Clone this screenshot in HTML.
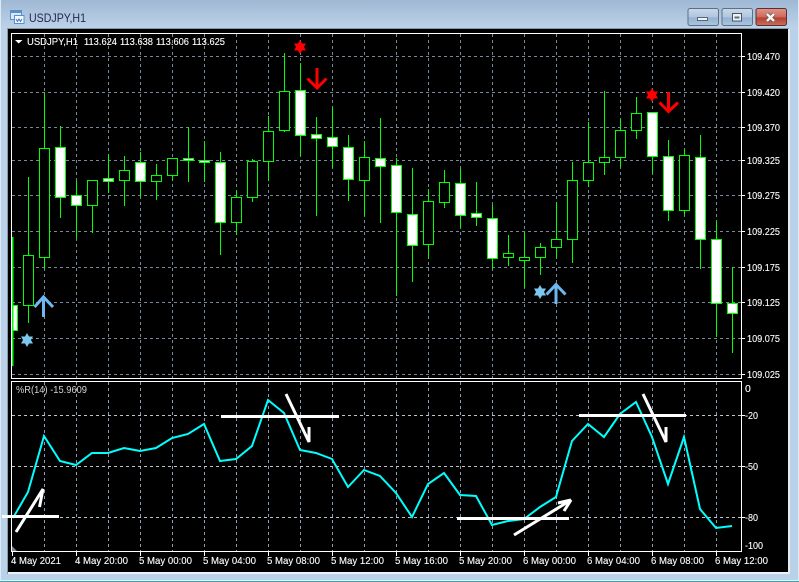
<!DOCTYPE html>
<html><head><meta charset="utf-8"><title>USDJPY,H1</title>
<style>
html,body{margin:0;padding:0;width:799px;height:582px;overflow:hidden;background:#b9d1e9}
svg{display:block;position:absolute;left:0;top:0}
text{font-family:"Liberation Sans",sans-serif;font-size:10.5px;fill:#fff;stroke:#fff;stroke-width:.12px}
.c rect{stroke:#00ff00;stroke-width:1}
.w{fill:#fff}.b{fill:#000}
</style></head><body>
<svg width="799" height="582" viewBox="0 0 799 582" xmlns="http://www.w3.org/2000/svg">
<defs>
<linearGradient id="tb" x1="0" y1="0" x2="0" y2="1"><stop offset="0" stop-color="#9fb8d3"/><stop offset="1" stop-color="#bdd3ea"/></linearGradient>
<linearGradient id="bt" x1="0" y1="0" x2="0" y2="1"><stop offset="0" stop-color="#c9d9ea"/><stop offset=".5" stop-color="#b0c6de"/><stop offset=".55" stop-color="#94b2d0"/><stop offset="1" stop-color="#aac6e2"/></linearGradient>
<linearGradient id="cl" x1="0" y1="0" x2="0" y2="1"><stop offset="0" stop-color="#e0958a"/><stop offset=".5" stop-color="#cc6a5c"/><stop offset=".55" stop-color="#b5402f"/><stop offset="1" stop-color="#c8705c"/></linearGradient>
<clipPath id="mc"><rect x="12" y="34" width="729" height="344"/></clipPath>
</defs>
<rect width="799" height="582" fill="#b9d1e9"/>
<rect width="799" height="29" fill="url(#tb)"/>
<rect x="0" y="0" width="1" height="582" fill="#dfe9f3"/>
<rect x="798" y="0" width="1" height="582" fill="#dfe9f3"/>
<rect x="0" y="581" width="799" height="1" fill="#2fa6b0"/>
<rect x="0" y="580" width="799" height="1" fill="#e8f0f7"/>
<rect x="7" y="28" width="782" height="546" fill="#8a97a5"/>
<rect x="8" y="29" width="780" height="543" fill="#000"/>
<rect x="8" y="572" width="781" height="2" fill="#eef2f6"/>
<rect x="788" y="29" width="2" height="545" fill="#e6ebf0"/>

<!-- title bar -->
<rect x="10.500" y="10.500" width="11" height="9" fill="#dbe9f7" stroke="#5b8fc7"/>
<rect x="11" y="11" width="10" height="2" fill="#5b8fc7"/>
<rect x="14.500" y="15.500" width="9.500" height="8" fill="#f4f8fc" stroke="#5b8fc7"/>
<path d="M16 19l1.500 2.500 1.500-2.500 1.500 2.500 1.500-2.500" fill="none" stroke="#3f78b8"/>
<text x="29" y="22" style="font-size:12px;fill:#26264e;stroke:none" textLength="57" lengthAdjust="spacingAndGlyphs">USDJPY,H1</text>

<rect x="688" y="8.500" width="30.500" height="17" rx="2" fill="url(#bt)" stroke="#5f6f82"/>
<rect x="697.500" y="17.500" width="10" height="3" fill="#f0f3f6" stroke="#56657a"/>
<rect x="722" y="8.500" width="30.500" height="17" rx="2" fill="url(#bt)" stroke="#5f6f82"/>
<rect x="732.500" y="13.500" width="9" height="7.500" fill="#eef2f6" stroke="#46566a"/>
<rect x="734.500" y="16.500" width="5" height="2" fill="#5a6c82"/>
<rect x="756" y="8.500" width="30.500" height="17" rx="2" fill="url(#cl)" stroke="#5c2f38"/>
<path d="M767 14l7 7M774 14l-7 7" stroke="#5d4b4b" stroke-width="4"/>
<path d="M767 14l7 7M774 14l-7 7" stroke="#f4f4f4" stroke-width="2.600"/>

<!-- panels -->
<rect x="11.500" y="33.500" width="730" height="345" fill="#000" stroke="#fff" shape-rendering="crispEdges"/>
<rect x="11.500" y="381.500" width="730" height="170" fill="#000" stroke="#fff" shape-rendering="crispEdges"/>

<!-- grid -->
<g fill="none" stroke="#778899" stroke-dasharray="3 3" shape-rendering="crispEdges">
<path d="M12 56.500H741M12 92.500H741M12 127.500H741M12 160.500H741M12 195.500H741M12 231.500H741M12 267.500H741M12 302.500H741M12 338.500H741M12 374.500H741"/>
<path d="M44.500 34V378M76.500 34V378M108.500 34V378M140.500 34V378M172.500 34V378M204.500 34V378M236.500 34V378M268.500 34V378M300.500 34V378M332.500 34V378M364.500 34V378M396.500 34V378M428.500 34V378M460.500 34V378M492.500 34V378M524.500 34V378M556.500 34V378M588.500 34V378M620.500 34V378M652.500 34V378M684.500 34V378M716.500 34V378"/>
<path d="M44.500 382V551M76.500 382V551M108.500 382V551M140.500 382V551M172.500 382V551M204.500 382V551M236.500 382V551M268.500 382V551M300.500 382V551M332.500 382V551M364.500 382V551M396.500 382V551M428.500 382V551M460.500 382V551M492.500 382V551M524.500 382V551M556.500 382V551M588.500 382V551M620.500 382V551M652.500 382V551M684.500 382V551M716.500 382V551" stroke="#8c9cb0"/>
<path d="M12 415.500H741M12 466.500H741M12 517.500H741" stroke="#c0c4c8"/>
</g>

<!-- candles -->
<g clip-path="url(#mc)" shape-rendering="crispEdges">
<path fill="none" stroke="#00ff00" d="M28.500 177V323M44.500 93V269M60.500 126V218M76.500 181V238M92.500 180V233M108.500 154V193M124.500 156V206M140.500 152V197M156.500 164V200M172.500 158V181M188.500 127V182M204.500 141V182M220.500 152V255M236.500 190V235M252.500 159V202M268.500 116V181M284.500 53V132M300.500 63V156M316.500 117V216M332.500 107V168M348.500 135V201M364.500 141V216M380.500 118V223M396.500 158V296M412.500 168V282M428.500 189V259M444.500 170V208M460.500 169V228M476.500 182V226M492.500 205V269M508.500 235V266M524.500 232V288M540.500 243V275M556.500 202V258M572.500 162V263M588.500 122V187M604.500 91V175M620.500 119V167M636.500 97V139M652.500 112V173M668.500 140V221M684.500 149V215M700.500 135V269M716.500 221V337M732.500 267V353"/>
<g class="c">
<rect class="w" x="7.500" y="305.500" width="10" height="25"/>
<rect class="b" x="23.500" y="255.500" width="10" height="50"/>
<rect class="b" x="39.500" y="148.500" width="10" height="109"/>
<rect class="w" x="55.500" y="147.500" width="10" height="50"/>
<rect class="w" x="71.500" y="195.500" width="10" height="10"/>
<rect class="b" x="87.500" y="180.500" width="10" height="25"/>
<rect class="w" x="103.500" y="178.500" width="10" height="3"/>
<rect class="b" x="119.500" y="170.500" width="10" height="10"/>
<rect class="w" x="135.500" y="162.500" width="10" height="19"/>
<rect class="b" x="151.500" y="175.500" width="10" height="6"/>
<rect class="b" x="167.500" y="158.500" width="10" height="17"/>
<rect class="w" x="183.500" y="158.500" width="10" height="2"/>
<rect class="w" x="199.500" y="160.500" width="10" height="2"/>
<rect class="w" x="215.500" y="162.500" width="10" height="60"/>
<rect class="b" x="231.500" y="197.500" width="10" height="25"/>
<rect class="b" x="247.500" y="161.500" width="10" height="36"/>
<rect class="b" x="263.500" y="131.500" width="10" height="30"/>
<rect class="b" x="279.500" y="91.500" width="10" height="39"/>
<rect class="w" x="295.500" y="90.500" width="10" height="45"/>
<rect class="w" x="311.500" y="134.500" width="10" height="4"/>
<rect class="w" x="327.500" y="137.500" width="10" height="9"/>
<rect class="w" x="343.500" y="147.500" width="10" height="32"/>
<rect class="b" x="359.500" y="157.500" width="10" height="23"/>
<rect class="w" x="375.500" y="158.500" width="10" height="8"/>
<rect class="w" x="391.500" y="165.500" width="10" height="47"/>
<rect class="w" x="407.500" y="214.500" width="10" height="31"/>
<rect class="b" x="423.500" y="201.500" width="10" height="43"/>
<rect class="b" x="439.500" y="182.500" width="10" height="20"/>
<rect class="w" x="455.500" y="183.500" width="10" height="32"/>
<rect class="w" x="471.500" y="213.500" width="10" height="4"/>
<rect class="w" x="487.500" y="218.500" width="10" height="40"/>
<rect class="b" x="503.500" y="253.500" width="10" height="4"/>
<rect class="b" x="519.500" y="257.500" width="10" height="3"/>
<rect class="b" x="535.500" y="247.500" width="10" height="10"/>
<rect class="b" x="551.500" y="239.500" width="10" height="8"/>
<rect class="b" x="567.500" y="180.500" width="10" height="59"/>
<rect class="b" x="583.500" y="162.500" width="10" height="18"/>
<rect class="b" x="599.500" y="157.500" width="10" height="5"/>
<rect class="b" x="615.500" y="130.500" width="10" height="27"/>
<rect class="b" x="631.500" y="113.500" width="10" height="17"/>
<rect class="w" x="647.500" y="112.500" width="10" height="44"/>
<rect class="w" x="663.500" y="156.500" width="10" height="54"/>
<rect class="b" x="679.500" y="155.500" width="10" height="55"/>
<rect class="w" x="695.500" y="157.500" width="10" height="82"/>
<rect class="w" x="711.500" y="239.500" width="10" height="64"/>
<rect class="w" x="727.500" y="303.500" width="10" height="10"/>
</g>
<path fill="none" stroke="#00ff00" stroke-width="1.500" d="M12.800 237V366"/>
</g>

<!-- red markers -->
<g fill="#ff0000">
<polygon points="300,40 306,50.500 294,50.500"/><polygon points="300,54 306,43.500 294,43.500"/>
<polygon points="652,88 658,98.500 646,98.500"/><polygon points="652,102 658,91.500 646,91.500"/>
</g>
<g fill="none" stroke="#ff0000" stroke-width="3">
<path d="M317 68V87M307.500 78.500L317 88L326.500 78.500"/>
<path d="M668.500 92V111M659.500 102.500L668.500 111.500L678 102.500"/>
</g>

<!-- blue markers -->
<g fill="#7cc8ee">
<polygon points="27,333 33,343.500 21,343.500"/><polygon points="27,347 33,336.500 21,336.500"/>
<polygon points="540,285 546,295.500 534,295.500"/><polygon points="540,299 546,288.500 534,288.500"/>
</g>
<g fill="none" stroke="#6db8f0" stroke-width="3">
<path d="M43.500 297V317M34.500 307L43.500 297L53 307"/>
<path d="M556 284V304M546.500 294.500L556 284.500L565.500 294.500"/>
</g>

<!-- %R line -->
<path fill="none" stroke="#00ffff" stroke-width="2" stroke-linejoin="miter" d="M13 518L28 492L44 436L60 461L76 465L92 453L108 453L124 448L140 451L156 448L172 438L188 434L204 424L220 461L236 459L252 446L268 400L284 413L300 450L316 453L332 459L348 487L364 470L380 476L396 493L412 517L428 484L444 473L460 495L476 496L492 525L508 521L524 519L540 507L556 497L572 441L588 424L604 437L620 414L636 402L652 437L668 484L684 437L700 509L716 528L732 526"/>

<!-- drawn white objects -->
<g fill="none" stroke="#fff" stroke-width="3">
<path d="M2 516.500H59"/>
<path d="M16 532L43 489L39.500 507"/>
<path d="M221 416.500H339"/>
<path d="M286 394L309 442V427"/>
<path d="M457 518.500H569"/>
<path d="M514 535L571 500L564 511M571 500L558 503"/>
<path d="M579 415.500H686"/>
<path d="M643 394L666 442V427"/>
</g>

<!-- small triangle -->
<path d="M12 546L17 551H12Z" fill="#778899"/>
<path d="M15 40H22.500L18.700 43.500Z" fill="#fff"/>

<!-- header text -->
<text x="27" y="45" textLength="51" lengthAdjust="spacingAndGlyphs">USDJPY,H1</text>
<text x="84" y="45" textLength="33" lengthAdjust="spacingAndGlyphs">113.624</text>
<text x="120" y="45" textLength="33" lengthAdjust="spacingAndGlyphs">113.638</text>
<text x="156" y="45" textLength="33" lengthAdjust="spacingAndGlyphs">113.606</text>
<text x="192" y="45" textLength="33" lengthAdjust="spacingAndGlyphs">113.625</text>
<text x="16" y="393" textLength="71" lengthAdjust="spacingAndGlyphs" style="fill:#d4d4d4;stroke:none">%R(14) -15.9609</text>

<!-- axis ticks -->
<path fill="none" stroke="#fff" shape-rendering="crispEdges" d="M741 56.500h4M741 92.500h4M741 127.500h4M741 160.500h4M741 195.500h4M741 231.500h4M741 267.500h4M741 302.500h4M741 338.500h4M741 374.500h4M741 415.500h4M741 466.500h4M741 517.500h4M12.500 552v4M76.500 552v4M140.500 552v4M204.500 552v4M268.500 552v4M332.500 552v4M396.500 552v4M460.500 552v4M524.500 552v4M588.500 552v4M652.500 552v4M716.500 552v4"/>

<!-- price labels -->
<text x="747" y="60" textLength="33" lengthAdjust="spacingAndGlyphs">109.470</text>
<text x="747" y="96" textLength="33" lengthAdjust="spacingAndGlyphs">109.420</text>
<text x="747" y="131" textLength="33" lengthAdjust="spacingAndGlyphs">109.370</text>
<text x="747" y="164" textLength="33" lengthAdjust="spacingAndGlyphs">109.325</text>
<text x="747" y="199" textLength="33" lengthAdjust="spacingAndGlyphs">109.275</text>
<text x="747" y="235" textLength="33" lengthAdjust="spacingAndGlyphs">109.225</text>
<text x="747" y="271" textLength="33" lengthAdjust="spacingAndGlyphs">109.175</text>
<text x="747" y="306" textLength="33" lengthAdjust="spacingAndGlyphs">109.125</text>
<text x="747" y="342" textLength="33" lengthAdjust="spacingAndGlyphs">109.075</text>
<text x="747" y="378" textLength="33" lengthAdjust="spacingAndGlyphs">109.025</text>

<!-- indicator labels -->
<text x="745" y="392">0</text>
<text x="745" y="419" textLength="13" lengthAdjust="spacingAndGlyphs">-20</text>
<text x="745" y="470" textLength="13" lengthAdjust="spacingAndGlyphs">-50</text>
<text x="745" y="521" textLength="13" lengthAdjust="spacingAndGlyphs">-80</text>
<text x="745" y="549" textLength="18" lengthAdjust="spacingAndGlyphs">-100</text>

<!-- time labels -->
<text x="11" y="564" textLength="50" lengthAdjust="spacingAndGlyphs">4 May 2021</text>
<text x="75" y="564" textLength="53" lengthAdjust="spacingAndGlyphs">4 May 20:00</text>
<text x="139" y="564" textLength="53" lengthAdjust="spacingAndGlyphs">5 May 00:00</text>
<text x="203" y="564" textLength="53" lengthAdjust="spacingAndGlyphs">5 May 04:00</text>
<text x="267" y="564" textLength="53" lengthAdjust="spacingAndGlyphs">5 May 08:00</text>
<text x="331" y="564" textLength="53" lengthAdjust="spacingAndGlyphs">5 May 12:00</text>
<text x="395" y="564" textLength="53" lengthAdjust="spacingAndGlyphs">5 May 16:00</text>
<text x="459" y="564" textLength="53" lengthAdjust="spacingAndGlyphs">5 May 20:00</text>
<text x="523" y="564" textLength="53" lengthAdjust="spacingAndGlyphs">6 May 00:00</text>
<text x="587" y="564" textLength="53" lengthAdjust="spacingAndGlyphs">6 May 04:00</text>
<text x="651" y="564" textLength="53" lengthAdjust="spacingAndGlyphs">6 May 08:00</text>
<text x="715" y="564" textLength="53" lengthAdjust="spacingAndGlyphs">6 May 12:00</text>
</svg>
</body></html>
